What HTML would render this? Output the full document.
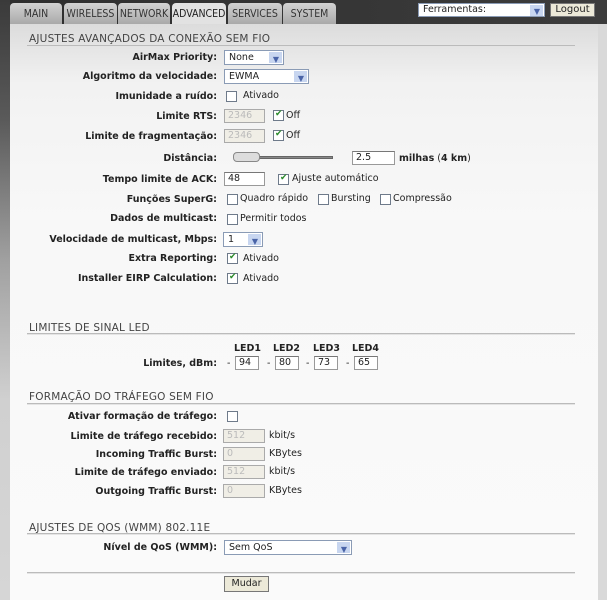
<!DOCTYPE html>
<html><head><meta charset="utf-8"><style>
*{box-sizing:border-box;margin:0;padding:0}
body{width:607px;height:600px;overflow:hidden;background:#d6d6d6;font-family:"DejaVu Sans","Liberation Sans",sans-serif;font-size:9.5px;color:#222;position:relative}
#left{position:absolute;left:0;top:0;width:10px;height:600px;background:linear-gradient(#3a3a3a,#5a5a5a 120px,#a0a0a0 260px,#d0d0d0 400px,#d6d6d6)}
#top{position:absolute;left:0;top:0;width:607px;height:24px;background:linear-gradient(90deg,#2e2e2e,#3c3c3c)}
#panel{position:absolute;left:10px;top:24px;width:588px;height:576px;background:linear-gradient(#dcdcdc,#f2f2f2 60px,#f8f8f8 200px,#fafafa)}
#right{position:absolute;left:598px;top:24px;width:9px;height:576px;background:#d9d9d9}
.tab{position:absolute;top:3px;height:21px;background:linear-gradient(#d2d2d2,#a9a9a9);border-radius:4px 4px 0 0;font-family:"DejaVu Sans Condensed","Liberation Sans Narrow","Liberation Sans",sans-serif;font-size:10.5px;color:#333;text-align:center;line-height:23px}
.tab.act{background:#e2e2e2;color:#222;height:21px}
.a{position:absolute;margin-top:1px}
.lbl{position:absolute;left:0;width:217px;text-align:right;font-weight:bold;font-size:9.5px;color:#222;margin-top:1px}
.h{position:absolute;left:29px;font-size:10.5px;color:#444;letter-spacing:.2px;margin-top:1px}
.ln{position:absolute;left:27px;width:548px;height:2px;border-top:1px solid #bbb;border-bottom:1px solid #e4e4e4}
.inp{position:absolute;height:14px;background:#fff;border:1px solid #999;border-top-color:#777;font-size:9.5px;line-height:12px;padding-left:3px;color:#222}
.dis{background:#f0eee6;color:#bbb;border-color:#aaa}
.sel{position:absolute;height:15px;background:#fff;border:1px solid #8a9bb5;font-size:9.5px;line-height:13px;padding-left:4px}
.sel:after{content:"";position:absolute;right:1px;top:1px;width:13px;height:11px;background:#c8d6f0 }
.sel i{position:absolute;right:4px;top:2px;z-index:2;font-style:normal;color:#4a64a8;font-size:8px;font-weight:bold}
.cb{position:absolute;width:11px;height:11px;background:#fff;border:1px solid #6e7a8a}
.cb.on:after{content:"✔";position:absolute;left:1px;top:-2px;font-size:9px;color:#2a8a2a}
.btn{position:absolute;background:#ece9d8;border:1px solid #777;font-size:9.5px;text-align:center;line-height:13px}
</style></head><body>
<div id="top"></div><div id="left"></div><div id="panel"></div><div id="right"></div>
<div class="tab" style="left:10px;width:52px">MAIN</div>
<div class="tab" style="left:64px;width:53px">WIRELESS</div>
<div class="tab" style="left:118px;width:52px">NETWORK</div>
<div class="tab act" style="left:172px;width:54px">ADVANCED</div>
<div class="tab" style="left:228px;width:54px">SERVICES</div>
<div class="tab" style="left:283px;width:53px">SYSTEM</div>
<div class="sel" style="left:418px;top:3px;width:127px;height:14px;line-height:12px">Ferramentas:<i>▼</i></div>
<div class="btn" style="left:550px;top:3px;width:45px;height:14px;line-height:12px;font-size:10px">Logout</div>

<div class="h" style="top:32px">AJUSTES AVANÇADOS DA CONEXÃO SEM FIO</div>
<div class="ln" style="top:45px"></div>

<div class="lbl" style="top:51px">AirMax Priority:</div>
<div class="sel" style="left:224px;top:50px;width:60px">None<i>▼</i></div>
<div class="lbl" style="top:70px">Algoritmo da velocidade:</div>
<div class="sel" style="left:224px;top:69px;width:85px">EWMA<i>▼</i></div>
<div class="lbl" style="top:90px">Imunidade a ruído:</div>
<div class="cb" style="left:226px;top:91px"></div><div class="a" style="left:243px;top:89px">Ativado</div>
<div class="lbl" style="top:110px">Limite RTS:</div>
<div class="inp dis" style="left:224px;top:109px;width:41px">2346</div>
<div class="cb on" style="left:273px;top:110px"></div><div class="a" style="left:286px;top:109px">Off</div>
<div class="lbl" style="top:130px">Limite de fragmentação:</div>
<div class="inp dis" style="left:224px;top:129px;width:41px">2346</div>
<div class="cb on" style="left:273px;top:130px"></div><div class="a" style="left:286px;top:129px">Off</div>
<div class="lbl" style="top:152px">Distância:</div>
<div class="a" style="left:248px;top:155px;width:85px;height:3px;background:#888;border:1px solid #666"></div>
<div class="a" style="left:233px;top:151px;width:27px;height:10px;background:#ddd;border:1px solid #888;border-radius:4px"></div>
<div class="inp" style="left:352px;top:151px;width:43px">2.5</div>
<div class="a" style="left:399px;top:152px"><b>milhas</b> (<b>4 km</b>)</div>
<div class="lbl" style="top:173px">Tempo limite de ACK:</div>
<div class="inp" style="left:224px;top:172px;width:41px">48</div>
<div class="cb on" style="left:278px;top:174px"></div><div class="a" style="left:292px;top:172px">Ajuste automático</div>
<div class="lbl" style="top:193px">Funções SuperG:</div>
<div class="cb" style="left:227px;top:194px"></div><div class="a" style="left:240px;top:192px">Quadro rápido</div>
<div class="cb" style="left:318px;top:194px"></div><div class="a" style="left:331px;top:192px">Bursting</div>
<div class="cb" style="left:380px;top:194px"></div><div class="a" style="left:393px;top:192px">Compressão</div>
<div class="lbl" style="top:212px">Dados de multicast:</div>
<div class="cb" style="left:227px;top:214px"></div><div class="a" style="left:240px;top:212px">Permitir todos</div>
<div class="lbl" style="top:233px">Velocidade de multicast, Mbps:</div>
<div class="sel" style="left:223px;top:232px;width:40px">1<i>▼</i></div>
<div class="lbl" style="top:252px">Extra Reporting:</div>
<div class="cb on" style="left:227px;top:253px"></div><div class="a" style="left:243px;top:252px">Ativado</div>
<div class="lbl" style="top:272px">Installer EIRP Calculation:</div>
<div class="cb on" style="left:227px;top:273px"></div><div class="a" style="left:243px;top:272px">Ativado</div>

<div class="h" style="top:321px">LIMITES DE SINAL LED</div>
<div class="ln" style="top:333px"></div>
<div class="a" style="left:234px;top:342px;font-weight:bold">LED1</div>
<div class="a" style="left:273px;top:342px;font-weight:bold">LED2</div>
<div class="a" style="left:313px;top:342px;font-weight:bold">LED3</div>
<div class="a" style="left:352px;top:342px;font-weight:bold">LED4</div>
<div class="lbl" style="top:357px">Limites, dBm:</div>
<div class="a" style="left:227px;top:357px">-</div><div class="inp" style="left:235px;top:356px;width:24px">94</div>
<div class="a" style="left:267px;top:357px">-</div><div class="inp" style="left:275px;top:356px;width:24px">80</div>
<div class="a" style="left:306px;top:357px">-</div><div class="inp" style="left:314px;top:356px;width:24px">73</div>
<div class="a" style="left:346px;top:357px">-</div><div class="inp" style="left:354px;top:356px;width:24px">65</div>

<div class="h" style="top:390px">FORMAÇÃO DO TRÁFEGO SEM FIO</div>
<div class="ln" style="top:403px"></div>
<div class="lbl" style="top:410px">Ativar formação de tráfego:</div>
<div class="cb" style="left:227px;top:411px"></div>
<div class="lbl" style="top:430px">Limite de tráfego recebido:</div>
<div class="inp dis" style="left:223px;top:429px;width:42px">512</div><div class="a" style="left:269px;top:429px">kbit/s</div>
<div class="lbl" style="top:448px">Incoming Traffic Burst:</div>
<div class="inp dis" style="left:223px;top:447px;width:42px">0</div><div class="a" style="left:269px;top:447px">KBytes</div>
<div class="lbl" style="top:466px">Limite de tráfego enviado:</div>
<div class="inp dis" style="left:223px;top:465px;width:42px">512</div><div class="a" style="left:269px;top:465px">kbit/s</div>
<div class="lbl" style="top:485px">Outgoing Traffic Burst:</div>
<div class="inp dis" style="left:223px;top:484px;width:42px">0</div><div class="a" style="left:269px;top:484px">KBytes</div>

<div class="h" style="top:521px">AJUSTES DE QOS (WMM) 802.11E</div>
<div class="ln" style="top:533px"></div>
<div class="lbl" style="top:541px">Nível de QoS (WMM):</div>
<div class="sel" style="left:224px;top:540px;width:128px">Sem QoS<i>▼</i></div>
<div class="ln" style="top:572px"></div>
<div class="btn" style="left:224px;top:576px;width:45px;height:16px">Mudar</div>
</body></html>
